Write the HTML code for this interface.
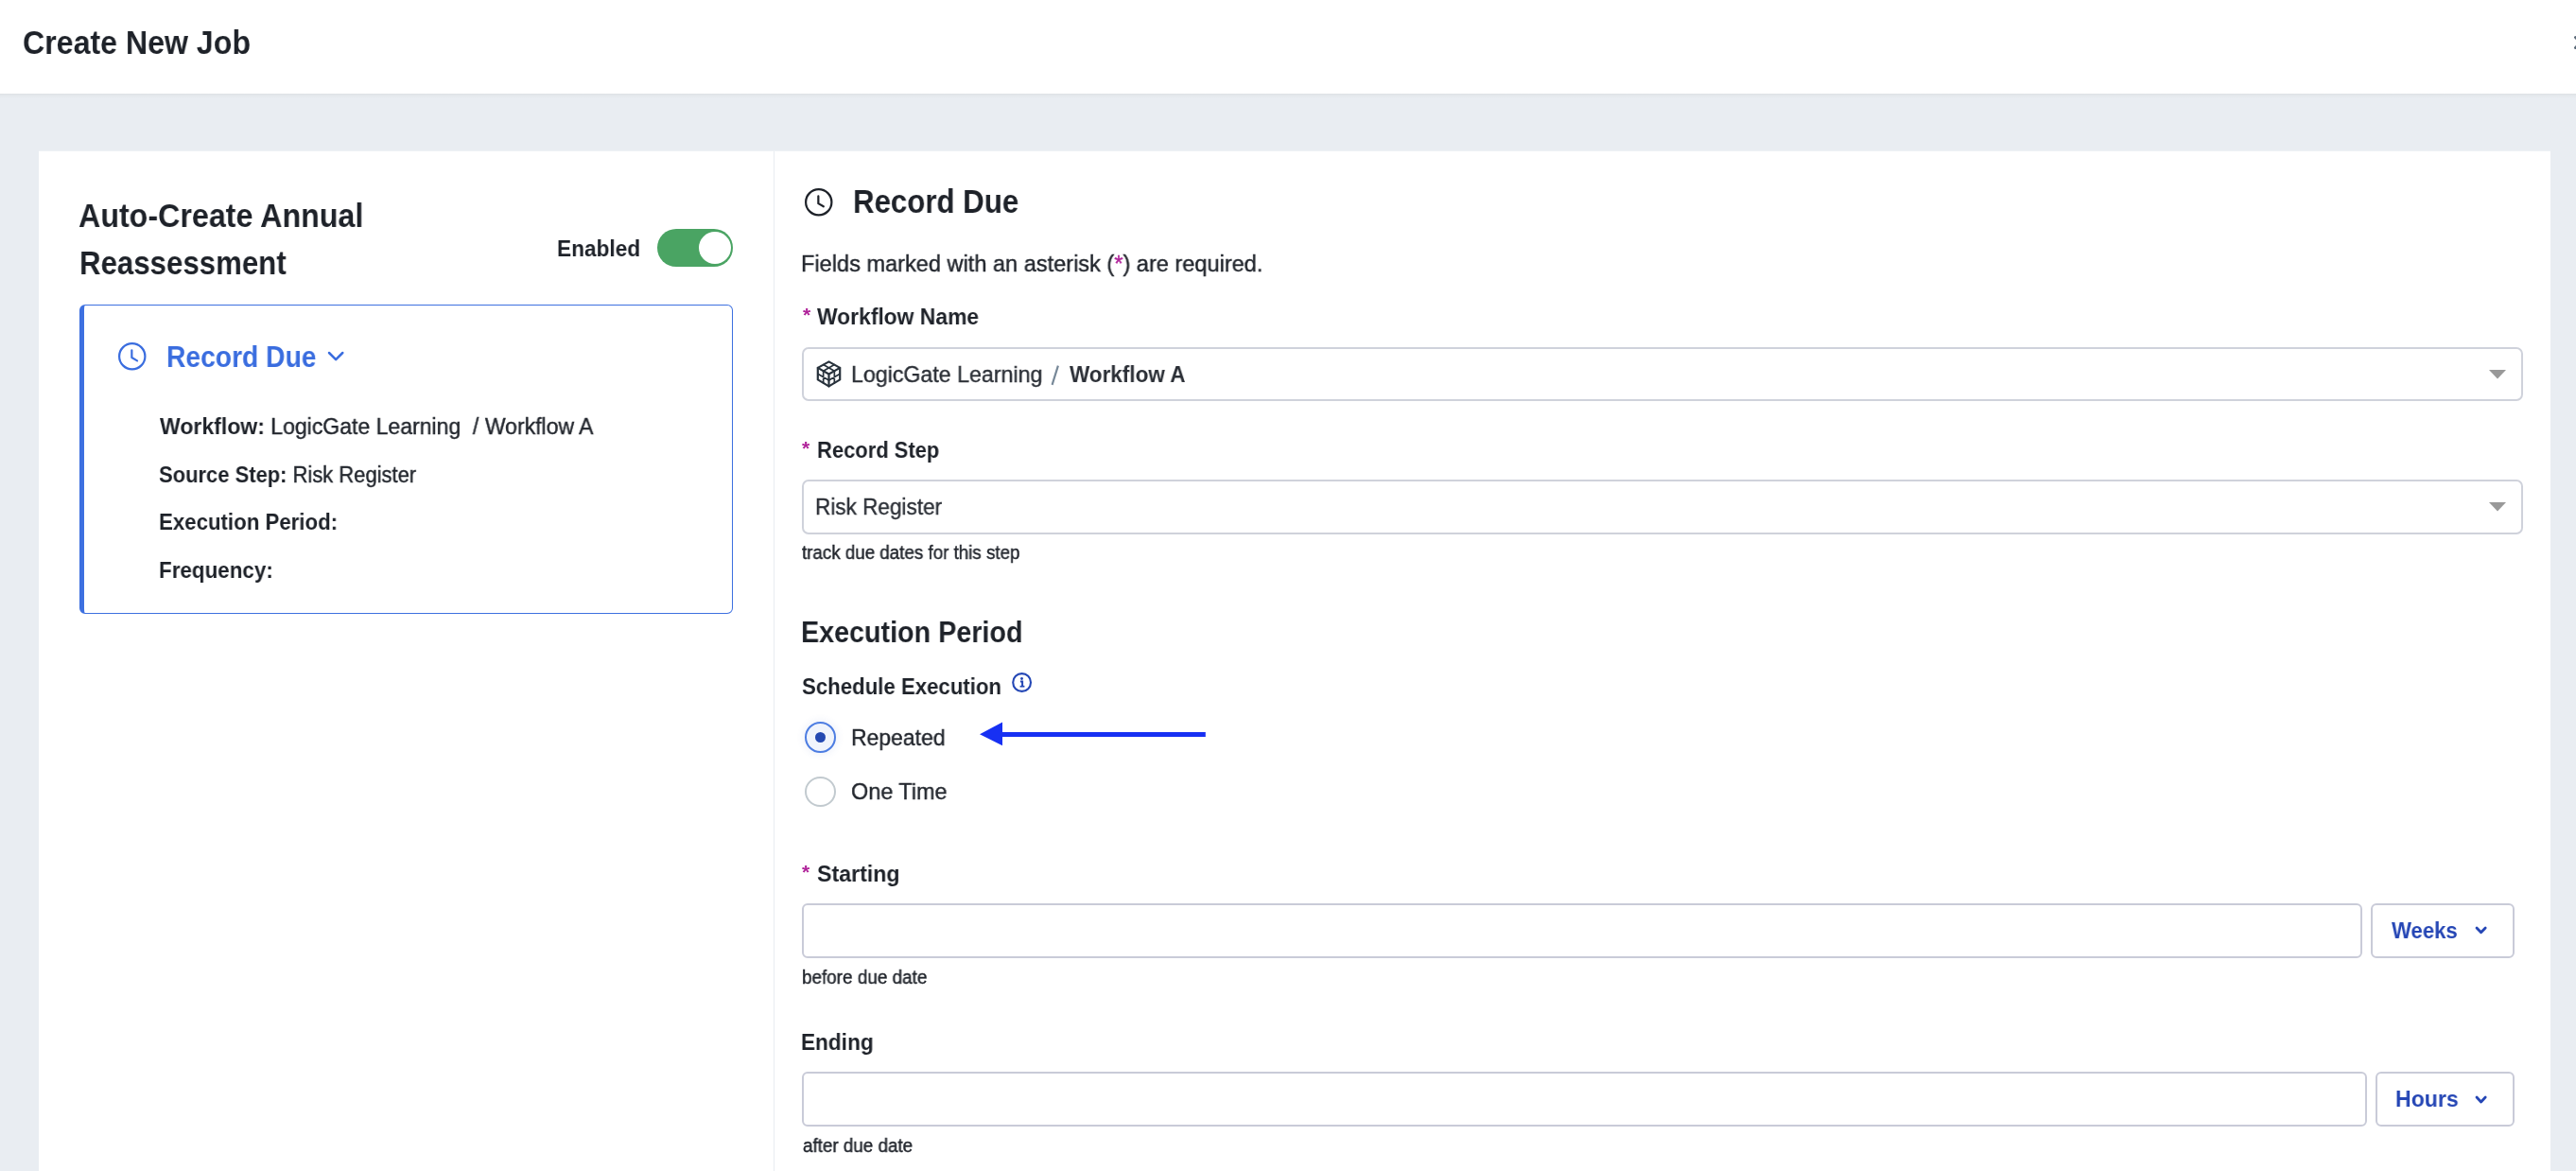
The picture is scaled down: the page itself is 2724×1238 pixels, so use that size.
<!DOCTYPE html>
<html><head><meta charset="utf-8"><title>Create New Job</title>
<style>
html,body{margin:0;padding:0;width:2724px;height:1238px;overflow:hidden;background:#e9edf2;font-family:"Liberation Sans",sans-serif}
.ab{position:absolute}
.tx{position:absolute;white-space:pre;transform-origin:0 0;z-index:4;will-change:transform}
</style></head><body>
<div class="ab" style="left:0px;top:0px;width:2724px;height:99px;background:#fff;z-index:2"></div>
<div class="ab" style="left:0px;top:99px;width:2724px;height:5px;background:linear-gradient(#dce0e4,#e3e7eb 30%,#e9edf2);z-index:1"></div>
<svg class="ab" style="left:2712px;top:34px;z-index:3" width="22" height="22"><path d="M11.5,5.5 L22.5,16.5 M22.5,5.5 L11.5,16.5" stroke="#5b6a78" stroke-width="3" stroke-linecap="round"/></svg>
<div class="ab" style="left:41px;top:159px;width:2656px;height:1px;background:#eef1f5"></div>
<div class="ab" style="left:41px;top:160px;width:2656px;height:1140px;background:#fff"></div>
<div class="ab" style="left:818px;top:160px;width:1px;height:1140px;background:#e9ecf1"></div>
<div class="ab" style="left:695px;top:242px;width:80px;height:40px;background:#4aa463;border-radius:20px"></div>
<div class="ab" style="left:738.5px;top:244.5px;width:34px;height:34px;background:#fff;border-radius:50%"></div>
<div class="ab" style="left:84px;top:322px;width:691px;height:327px;border:1.5px solid #3d70e0;border-left:5px solid #3d70e0;border-radius:6px;box-sizing:border-box"></div>
<svg class="ab" style="left:123.15px;top:360.05px" width="33.5" height="33.5"><circle cx="16.75" cy="16.75" r="13.65" fill="none" stroke="#3a6ddf" stroke-width="2.2"/><polyline points="16.35,10.35 16.35,18.05 22.05,21.35" fill="none" stroke="#3a6ddf" stroke-width="2.2" stroke-linecap="round" stroke-linejoin="round"/></svg>
<svg class="ab" style="left:345.25px;top:369.95px" width="20.3" height="13.2" viewBox="0 0 20.3 13.2"><polyline points="3,3 10.15,10.2 17.3,3" fill="none" stroke="#3a6ddf" stroke-width="2.5" stroke-linecap="round" stroke-linejoin="round"/></svg>
<svg class="ab" style="left:849.15px;top:197.15px" width="33.5" height="33.5"><circle cx="16.75" cy="16.75" r="13.65" fill="none" stroke="#1e2229" stroke-width="2.2"/><polyline points="16.35,10.45 16.35,18.15 21.85,21.25" fill="none" stroke="#1e2229" stroke-width="2.2" stroke-linecap="round" stroke-linejoin="round"/></svg>
<div class="ab" style="left:848px;top:367px;width:1820px;height:57px;border:2px solid #cfd2db;border-radius:7px;box-sizing:border-box;background:#fff"></div>
<div class="ab" style="left:848px;top:507px;width:1820px;height:58px;border:2px solid #cfd2db;border-radius:7px;box-sizing:border-box;background:#fff"></div>
<svg class="ab" style="left:2632px;top:390.5px" width="18" height="10"><polygon points="0,0 18,0 9,9.4" fill="#999999"/></svg>
<svg class="ab" style="left:2632px;top:530.5px" width="18" height="10"><polygon points="0,0 18,0 9,9.4" fill="#999999"/></svg>
<svg class="ab" style="left:863px;top:381px" width="27" height="29" viewBox="0 0 27 29">
<g fill="none" stroke="#28323c" stroke-width="2.2" stroke-linejoin="round" stroke-linecap="round">
<path d="M13.5,1.4 L25.2,7.9 L25.2,20.4 L13.5,27.4 L1.8,20.4 L1.8,7.9 Z"/>
<path d="M1.8,7.9 L13.5,14.5 L25.2,7.9 M13.5,14.5 L13.5,27.4"/>
<path d="M7.65,4.6 L19.35,11.2 M19.35,4.6 L7.65,11.2 M1.8,14.15 L13.5,21 L25.2,14.15 M7.65,11.2 L7.65,23.9 M19.35,11.2 L19.35,23.9" stroke-width="1.7"/>
</g></svg>
<svg class="ab" style="left:1110px;top:384px" width="12" height="24"><line x1="8.9" y1="2.6" x2="2.6" y2="22.8" stroke="#778898" stroke-width="2.2"/></svg>
<svg class="ab" style="left:1069px;top:710px" width="24" height="24" viewBox="0 0 24 24">
<circle cx="11.6" cy="11.5" r="9.4" fill="none" stroke="#2447b5" stroke-width="2.1"/>
<circle cx="11.5" cy="7.5" r="1.45" fill="#2447b5"/>
<path d="M9.9,10.6 L12.1,10.6 L12.1,15.4" fill="none" stroke="#2447b5" stroke-width="2"/>
<path d="M9.6,15.7 L14.4,15.7" fill="none" stroke="#2447b5" stroke-width="1.7"/>
</svg>
<div class="ab" style="left:851px;top:763px;width:33px;height:33px;border:2px solid #4d7de2;border-radius:50%;box-sizing:border-box;background:#f0f4fc;box-shadow:0 0 6px 3px rgba(80,110,200,0.07)"></div>
<div class="ab" style="left:861.9px;top:773.9px;width:11.2px;height:11.2px;background:#2449b1;border-radius:50%"></div>
<div class="ab" style="left:851px;top:821px;width:32.5px;height:32px;border:2px solid #c2cacf;border-radius:50%;box-sizing:border-box;background:#fff"></div>
<svg class="ab" style="left:1030px;top:758px" width="250" height="36"><polygon points="6,18.3 30,5.5 30,30.3" fill="#1730f3"/><rect x="28" y="16" width="216.8" height="5" fill="#1730f3"/></svg>
<div class="ab" style="left:848px;top:955px;width:1650px;height:58px;border:2px solid #c9cbd8;border-radius:6px;box-sizing:border-box;background:#fff"></div>
<div class="ab" style="left:2507px;top:955px;width:152px;height:58px;border:2px solid #c9cbd8;border-radius:6px;box-sizing:border-box;background:#fff"></div>
<svg class="ab" style="left:2615.6px;top:978px" width="15.2" height="10.8" viewBox="0 0 15.2 10.8"><polyline points="3,3 7.6,7.8 12.2,3" fill="none" stroke="#2546b5" stroke-width="2.8" stroke-linecap="round" stroke-linejoin="round"/></svg>
<div class="ab" style="left:848px;top:1133px;width:1655px;height:58px;border:2px solid #c9cbd8;border-radius:6px;box-sizing:border-box;background:#fff"></div>
<div class="ab" style="left:2512px;top:1133px;width:147px;height:58px;border:2px solid #c9cbd8;border-radius:6px;box-sizing:border-box;background:#fff"></div>
<svg class="ab" style="left:2615.6px;top:1156.8px" width="15.2" height="11" viewBox="0 0 15.2 11"><polyline points="3,3 7.6,8 12.2,3" fill="none" stroke="#2546b5" stroke-width="2.8" stroke-linecap="round" stroke-linejoin="round"/></svg>
<div id="t_header" class="tx" style="left:23.65px;top:27.86px;font-size:35.61px;line-height:35.61px;transform:scaleX(0.9019)"><span style="font-weight:700;color:#1e2229">Create New Job</span></div>
<div id="t_auto1" class="tx" style="left:82.95px;top:211.47px;font-size:34.88px;line-height:34.88px;transform:scaleX(0.9239)"><span style="font-weight:700;color:#1e2229">Auto-Create Annual</span></div>
<div id="t_auto2" class="tx" style="left:84.34px;top:261.47px;font-size:34.88px;line-height:34.88px;transform:scaleX(0.8951)"><span style="font-weight:700;color:#1e2229">Reassessment</span></div>
<div id="t_enabled" class="tx" style="left:588.72px;top:251.45px;font-size:24.27px;line-height:24.27px;transform:scaleX(0.9342)"><span style="font-weight:700;color:#1e2229">Enabled</span></div>
<div id="t_rd_blue" class="tx" style="left:175.61px;top:361.55px;font-size:31.25px;line-height:31.25px;transform:scaleX(0.9035)"><span style="font-weight:700;color:#3a6ddf">Record Due</span></div>
<div id="t_wf" class="tx" style="left:169.22px;top:438.7px;font-size:23.98px;line-height:23.98px;transform:scaleX(0.9606)"><span style="font-weight:700;color:#1e2229">Workflow:</span><span style="font-weight:400;color:#22262d;-webkit-text-stroke:0.4px #22262d"> LogicGate Learning  / Workflow A</span></div>
<div id="t_ss" class="tx" style="left:168.25px;top:489.7px;font-size:23.98px;line-height:23.98px;transform:scaleX(0.9162)"><span style="font-weight:700;color:#1e2229">Source Step:</span><span style="font-weight:400;color:#22262d;-webkit-text-stroke:0.4px #22262d"> Risk Register</span></div>
<div id="t_ep" class="tx" style="left:168.31px;top:539.7px;font-size:23.98px;line-height:23.98px;transform:scaleX(0.9280)"><span style="font-weight:700;color:#1e2229">Execution Period:</span></div>
<div id="t_fr" class="tx" style="left:168.29px;top:590.7px;font-size:23.98px;line-height:23.98px;transform:scaleX(0.9345)"><span style="font-weight:700;color:#1e2229">Frequency:</span></div>
<div id="t_rd" class="tx" style="left:901.92px;top:195.57px;font-size:34.88px;line-height:34.88px;transform:scaleX(0.8954)"><span style="font-weight:700;color:#1e2229">Record Due</span></div>
<div id="t_fields" class="tx" style="left:847.26px;top:267.33px;font-size:24.42px;line-height:24.42px;transform:scaleX(0.9653)"><span style="font-weight:400;color:#22262d;-webkit-text-stroke:0.4px #22262d">Fields marked with an asterisk (</span><span style="font-weight:400;color:#b0239a;-webkit-text-stroke:0.4px #b0239a">*</span><span style="font-weight:400;color:#22262d;-webkit-text-stroke:0.4px #22262d">) are required.</span></div>
<div id="t_wfn" class="tx" style="left:864px;top:322.58px;font-size:24.13px;line-height:24.13px;transform:scaleX(0.9478)"><span style="font-weight:700;color:#1e2229">Workflow Name</span></div>
<div id="t_lg" class="tx" style="left:899.88px;top:384.08px;font-size:24.71px;line-height:24.71px;transform:scaleX(0.9381)"><span style="font-weight:400;color:#2b2f36;-webkit-text-stroke:0.4px #2b2f36">LogicGate Learning</span></div>
<div id="t_wfa" class="tx" style="left:1131px;top:384.08px;font-size:24.71px;line-height:24.71px;transform:scaleX(0.9104)"><span style="font-weight:700;color:#2b2f36">Workflow A</span></div>
<div id="t_rs" class="tx" style="left:863.65px;top:463.63px;font-size:24.42px;line-height:24.42px;transform:scaleX(0.8994)"><span style="font-weight:700;color:#1e2229">Record Step</span></div>
<div id="t_rr" class="tx" style="left:861.72px;top:524.43px;font-size:24.42px;line-height:24.42px;transform:scaleX(0.9238)"><span style="font-weight:400;color:#2b2f36;-webkit-text-stroke:0.4px #2b2f36">Risk Register</span></div>
<div id="t_track" class="tx" style="left:848.22px;top:575.14px;font-size:19.33px;line-height:19.33px;transform:scaleX(0.9704)"><span style="font-weight:400;color:#22262d;-webkit-text-stroke:0.4px #22262d">track due dates for this step</span></div>
<div id="t_execp" class="tx" style="left:847.28px;top:653.47px;font-size:31.1px;line-height:31.1px;transform:scaleX(0.9232)"><span style="font-weight:700;color:#1e2229">Execution Period</span></div>
<div id="t_sched" class="tx" style="left:847.83px;top:714.4px;font-size:23.98px;line-height:23.98px;transform:scaleX(0.9266)"><span style="font-weight:700;color:#1e2229">Schedule Execution</span></div>
<div id="t_rep" class="tx" style="left:899.6px;top:768.08px;font-size:24.71px;line-height:24.71px;transform:scaleX(0.9289)"><span style="font-weight:400;color:#22262d;-webkit-text-stroke:0.4px #22262d">Repeated</span></div>
<div id="t_one" class="tx" style="left:899.75px;top:825.08px;font-size:24.71px;line-height:24.71px;transform:scaleX(0.9487)"><span style="font-weight:400;color:#22262d;-webkit-text-stroke:0.4px #22262d">One Time</span></div>
<div id="t_start" class="tx" style="left:863.63px;top:912.25px;font-size:24.27px;line-height:24.27px;transform:scaleX(0.9553)"><span style="font-weight:700;color:#1e2229">Starting</span></div>
<div id="t_before" class="tx" style="left:847.53px;top:1024.34px;font-size:19.33px;line-height:19.33px;transform:scaleX(0.9775)"><span style="font-weight:400;color:#22262d;-webkit-text-stroke:0.4px #22262d">before due date</span></div>
<div id="t_weeks" class="tx" style="left:2529.05px;top:971.53px;font-size:24.42px;line-height:24.42px;transform:scaleX(0.9066)"><span style="font-weight:700;color:#2546b5">Weeks</span></div>
<div id="t_ending" class="tx" style="left:847.17px;top:1090.21px;font-size:24.56px;line-height:24.56px;transform:scaleX(0.9215)"><span style="font-weight:700;color:#1e2229">Ending</span></div>
<div id="t_hours" class="tx" style="left:2532.93px;top:1149.73px;font-size:24.42px;line-height:24.42px;transform:scaleX(0.9456)"><span style="font-weight:700;color:#2546b5">Hours</span></div>
<div id="t_after" class="tx" style="left:848.51px;top:1201.54px;font-size:19.33px;line-height:19.33px;transform:scaleX(0.9731)"><span style="font-weight:400;color:#22262d;-webkit-text-stroke:0.4px #22262d">after due date</span></div>
<div id="a_wfn" class="tx" style="left:849px;top:322.12px;font-size:21.09px;line-height:21.09px;color:#b0239a;font-weight:700">*</div>
<div id="a_rs" class="tx" style="left:848.33px;top:462.99px;font-size:21.09px;line-height:21.09px;color:#b0239a;font-weight:700">*</div>
<div id="a_st" class="tx" style="left:848.33px;top:910.75px;font-size:21.09px;line-height:21.09px;color:#b0239a;font-weight:700">*</div>
</body></html>
